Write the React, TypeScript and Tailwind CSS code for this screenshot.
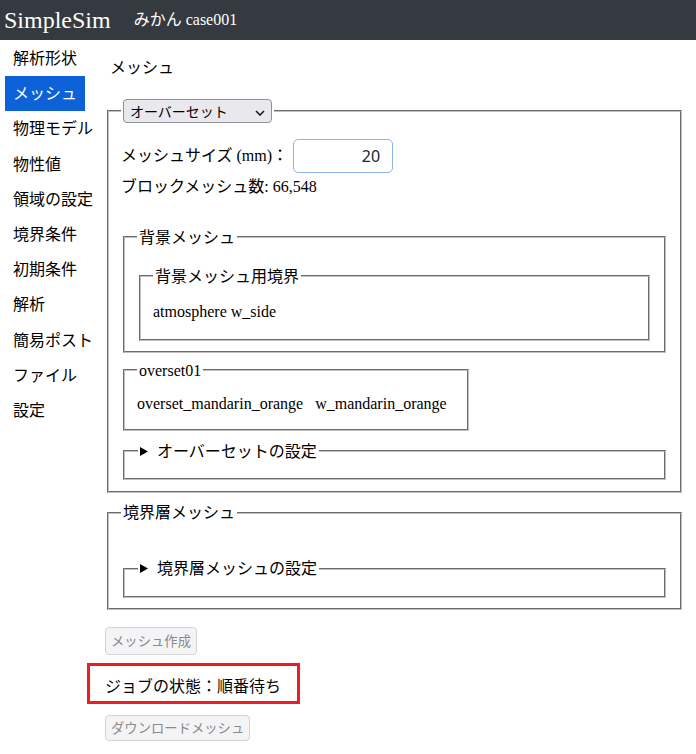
import React from 'react';

const navItems = ['解析形状', 'メッシュ', '物理モデル', '物性値', '領域の設定', '境界条件', '初期条件', '解析', '簡易ポスト', 'ファイル', '設定'];

const box = 'mx-[2px] px-3 pt-[5.6px] pb-[10px] border-2 border-[#c0c0c0] [border-style:groove]';

const Triangle: React.FC = () => (
  <svg width="8" height="9" viewBox="0 0 8 9" className="inline-block mr-[9px] align-[1px]">
    <path d="M0 0 L8 4.5 L0 9 Z" fill="#000" />
  </svg>
);

const DetailsBox: React.FC<{ title: string }> = ({ title }) => (
  <fieldset className={box}>
    <legend className="px-[2px] ml-[1px]">
      <Triangle />
      {title}
    </legend>
    <div className="h-[2px]" />
  </fieldset>
);

const App: React.FC = () => {
  return (
    <div className="min-h-[754px] bg-white text-black leading-[1.2] text-base font-['Liberation_Serif','Noto_Sans_CJK_JP',serif]">
      <header className="h-10 bg-[#343a40] text-white flex items-center pl-1">
        <span className="text-2xl">SimpleSim</span>
        <span className="ml-[23px] text-base">みかん case001</span>
      </header>

      <div className="flex">
        <nav className="w-[105px] shrink-0 pl-[5px] pt-[1px] flex flex-col items-start">
          {navItems.map(item => (
            <span
              key={item}
              className={`px-2 py-2 ${item === 'メッシュ' ? 'bg-[#0d62d9] text-white' : 'text-black'}`}
            >
              {item}
            </span>
          ))}
        </nav>

        <main className="flex-1 pr-3 pt-4">
          <h2 className="ml-[5px] text-base font-normal">メッシュ</h2>

          <fieldset className={`${box} mt-[19px]`}>
            <legend className="px-[2px]">
              <div className="relative w-[149px] h-6 rounded-[4px] border border-[#8f8f9d] bg-[#e9e9ed] flex items-center pl-[6px] text-[14px] font-['Noto_Sans_CJK_JP',sans-serif]">
                オーバーセット
                <svg width="10" height="6" viewBox="0 0 10 6" className="absolute right-[6px] top-[10px]">
                  <path d="M1 1 L5 5 L9 1" fill="none" stroke="#1c1c1c" strokeWidth="1.6" />
                </svg>
              </div>
            </legend>

            <div className="flex items-center mt-[10px]">
              <span>メッシュサイズ (mm)：</span>
              <input
                type="text"
                readOnly
                value="20"
                className="ml-[5px] w-[100px] h-[34px] rounded-[5px] border border-[#8ab4f0] text-right pr-3 text-base text-[#212529] font-['Noto_Sans',sans-serif] outline-none"
              />
            </div>
            <div className="mt-[4px]">ブロックメッシュ数: 66,548</div>

            <fieldset className={`${box} mt-8`}>
              <legend className="px-[2px]">背景メッシュ</legend>
              <fieldset className={`${box} mt-[14px]`}>
                <legend className="px-[2px]">背景メッシュ用境界</legend>
                <div className="mt-[11px] mb-[7px]">atmosphere w_side</div>
              </fieldset>
            </fieldset>

            <fieldset className={`${box} mt-2 w-fit pr-5`}>
              <legend className="px-[2px]">overset01</legend>
              <div className="mt-[9px] mb-[5px] whitespace-pre">overset_mandarin_orange   w_mandarin_orange</div>
            </fieldset>

            <div className="mt-[11px] mb-px">
              <DetailsBox title="オーバーセットの設定" />
            </div>
          </fieldset>

          <fieldset className={`${box} mt-[10px]`}>
            <legend className="px-[2px]">境界層メッシュ</legend>
            <div className="h-[31px]" />
            <DetailsBox title="境界層メッシュの設定" />
          </fieldset>

          <button
            disabled
            className="mt-[17px] h-[28px] px-[5px] rounded-[4px] border border-[#d4d4d8] bg-[#f4f4f6] text-[13.33px] text-[#8a8a8a] font-['Noto_Sans_CJK_JP',sans-serif]"
          >
            メッシュ作成
          </button>

          <div className="mt-2 -ml-[18px] w-[213px] h-[41px] border-[3px] border-[#ed1c24] pl-[15px] flex items-center">
            <span className="mt-[4px] font-['Noto_Sans_CJK_JP',sans-serif]">ジョブの状態：順番待ち</span>
          </div>

          <div>
            <button
              disabled
              className="mt-[11px] h-[26px] px-[5px] rounded-[4px] border border-[#d4d4d8] bg-[#f4f4f6] text-[13.33px] text-[#8a8a8a] font-['Noto_Sans_CJK_JP',sans-serif]"
            >
              ダウンロードメッシュ
            </button>
          </div>
        </main>
      </div>
    </div>
  );
};

export default App;
